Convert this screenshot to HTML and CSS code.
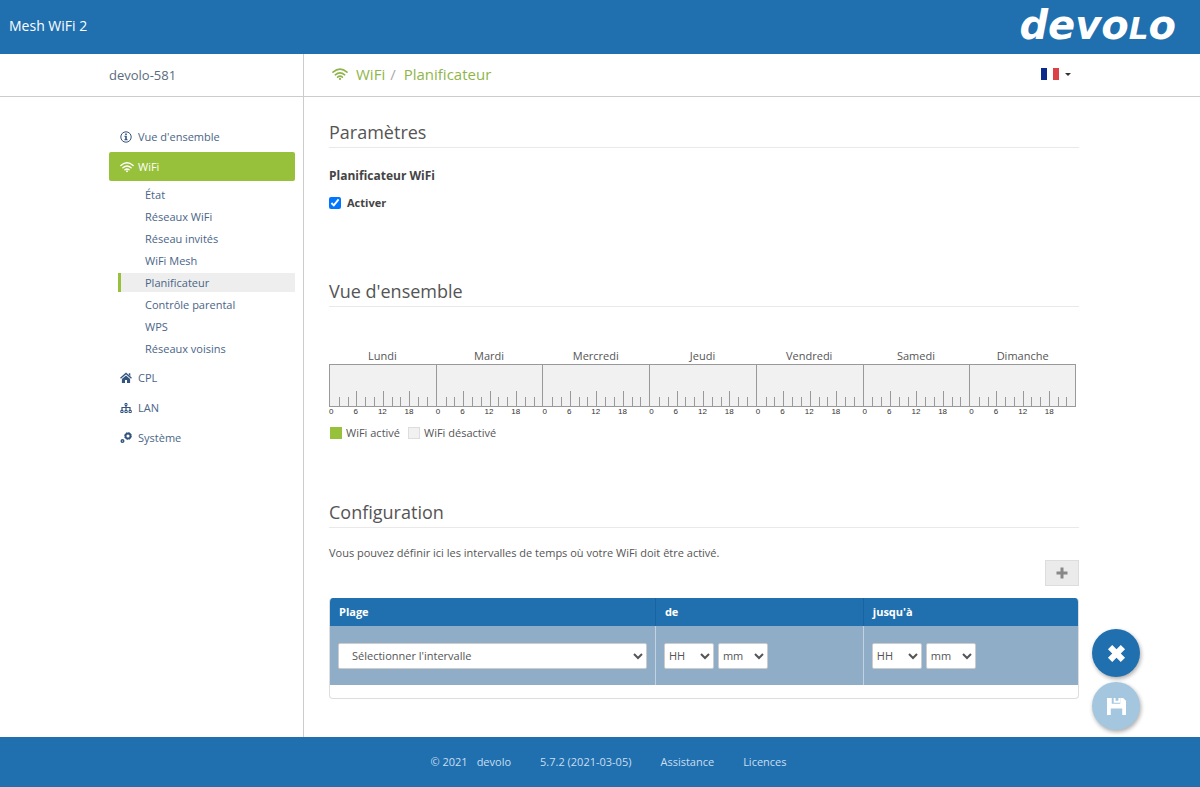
FILE: index.html
```html
<!DOCTYPE html>
<html lang="fr">
<head>
<meta charset="utf-8">
<title>Mesh WiFi 2 - Planificateur</title>
<link rel="stylesheet" href="styles.css">
</head>
<body>
<svg class="sprite" aria-hidden="true">
  <symbol id="wifi" viewBox="0 0 16 12"><g fill="none" stroke="currentColor" stroke-width="1.6" stroke-linecap="round"><path d="M1 4.2Q8-1.9 15 4.2"/><path d="M3.3 6.8Q8 2.8 12.7 6.8"/><path d="M5.6 9.2Q8 7.2 10.4 9.2"/></g><circle cx="8" cy="10.9" r="1.1" fill="currentColor"/></symbol>
</svg>
<header class="topbar">
  <span class="product">Mesh WiFi 2</span>
  <a class="logo" href="#" aria-label="devolo">devo<span class="logo-cap">L</span>o</a>
</header>
<div class="page">
  <aside class="side">
    <div class="device">devolo-581</div>
    <nav class="nav">
      <a class="item" href="#"><svg class="icon" viewBox="0 0 12 12" aria-hidden="true"><circle cx="6" cy="6" r="5.2" fill="none" stroke="currentColor"/><path fill="currentColor" d="M5.2 2.4h1.6V4H5.2zM4.4 4.8h2.4v3.5h.8v1H4.4v-1h.8V5.8h-.8z"/></svg>Vue d'ensemble</a>
      <a class="item active" href="#"><svg class="icon icon-wide" aria-hidden="true"><use href="#wifi"/></svg>WiFi</a>
      <div class="sub">
        <a href="#">État</a>
        <a href="#">Réseaux WiFi</a>
        <a href="#">Réseau invités</a>
        <a href="#">WiFi Mesh</a>
        <a class="current" href="#">Planificateur</a>
        <a href="#">Contrôle parental</a>
        <a href="#">WPS</a>
        <a href="#">Réseaux voisins</a>
      </div>
      <a class="item" href="#"><svg class="icon" viewBox="0 0 12 12" aria-hidden="true"><path fill="none" stroke="currentColor" stroke-width="1.3" d="M.5 6.3 6 1.4l5.5 4.9"/><path fill="currentColor" d="M8.8 1.2h1.5v3L8.8 2.8zM6 3.5l4.1 3.6V11H7V8H5v3H1.900V7.100z"/></svg>CPL</a>
      <a class="item" href="#"><svg class="icon" viewBox="0 0 12 12" aria-hidden="true"><path fill="none" stroke="currentColor" stroke-width="1.200" d="M6 3v6M2 9V5.500h8V9"/><path fill="none" stroke="currentColor" d="M5 1.500h2v2H5zM.800 8.500h2.300v2H.800zM4.900 8.500h2.300v2H4.900zM9 8.500h2.300v2H9z"/></svg>LAN</a>
      <a class="item" href="#"><svg class="icon" viewBox="0 0 12 12" aria-hidden="true"><g fill="none" stroke="currentColor"><circle cx="8" cy="4" r="2.500" stroke-width="1.900"/><circle cx="8" cy="4" r="3.500" stroke-width=".8" stroke-dasharray="1.400 1.350"/><circle cx="2.500" cy="9" r="1.300" stroke-width="1.400"/></g></svg>Système</a>
    </nav>
  </aside>
  <main class="main">
    <div class="crumbs">
      <div class="trail"><svg class="crumb-icon" aria-hidden="true"><use href="#wifi"/></svg><a href="#">WiFi</a><span class="slash">/</span><a href="#">Planificateur</a></div>
      <button class="lang" type="button" aria-label="Langue : français"><svg class="flag" viewBox="0 0 18 12" aria-hidden="true"><path fill="#0b2a8c" d="M0 0h6v12H0z"/><path fill="#fff" d="M6 0h6v12H6z"/><path fill="#dc4148" d="M12 0h6v12h-6z"/></svg><span class="caret"></span></button>
    </div>
    <div class="content">
      <section class="block params">
        <h2>Paramètres</h2>
        <h3>Planificateur WiFi</h3>
        <label class="check"><input type="checkbox" checked>Activer</label>
      </section>
      <section class="block overview">
        <h2>Vue d'ensemble</h2>
        <div class="week" id="week"></div>
        <div class="legend"><span class="key on"></span><span>WiFi activé</span><span class="key"></span><span>WiFi désactivé</span></div>
      </section>
      <section class="block">
        <h2>Configuration</h2>
        <p>Vous pouvez définir ici les intervalles de temps où votre WiFi doit être activé.</p>
        <div class="actions"><button class="add" type="button" aria-label="Ajouter"><svg viewBox="0 0 12 12" aria-hidden="true"><path fill="#888" d="M4.500.500h3v4h4v3h-4v4h-3v-4h-4v-3h4z"/></svg></button></div>
        <div class="panel">
          <table class="ranges">
            <thead><tr><th class="col-range">Plage</th><th class="col-from">de</th><th>jusqu'à</th></tr></thead>
            <tbody><tr>
              <td><select class="interval" aria-label="Plage"><option>Sélectionner l'intervalle</option></select></td>
              <td><div class="time"><select aria-label="de, heures"><option>HH</option></select><select aria-label="de, minutes"><option>mm</option></select></div></td>
              <td><div class="time"><select aria-label="jusqu'à, heures"><option>HH</option></select><select aria-label="jusqu'à, minutes"><option>mm</option></select></div></td>
            </tr></tbody>
          </table>
        </div>
      </section>
    </div>
  </main>
</div>
<footer class="footer"><span class="copy">© 2021 <a href="#">devolo</a></span><span>5.7.2 (2021-03-05)</span><a href="#">Assistance</a><a href="#">Licences</a></footer>
<div class="floating">
  <button class="round" type="button" aria-label="Annuler"><svg viewBox="0 0 20 20" aria-hidden="true"><path fill="#fff" d="M5.500 1 10 5.500 14.500 1 19 5.500 14.500 10l4.500 4.500-4.500 4.500-4.500-4.500L5.500 19 1 14.500 5.500 10 1 5.500z"/></svg></button>
  <button class="round" type="button" aria-label="Enregistrer" disabled><svg viewBox="0 0 20 20" aria-hidden="true"><path fill="#fff" d="M0 1h5v6h9V1h3l3 3v15h-4v-7H4v7H0z"/><path fill="#fff" d="M7 1h2v5H7zM9 4h3v2H9zM12 1h2v5h-2z"/></svg></button>
</div>
<script src="week.js"></script>
</body>
</html>
```
FILE: styles.css
```css
* { box-sizing: border-box; }
body {
  margin: 0;
  min-height: 100vh;
  display: flex;
  flex-direction: column;
  font: 11px/18px "Open Sans", "Noto Sans", sans-serif;
  color: #555;
  background: #fff;
}
a { color: inherit; text-decoration: none; }
button { padding: 0; border: 0; background: none; cursor: pointer; }
.sprite { display: none; }

.topbar {
  height: 54px;
  padding: 0 24px 2px 9px;
  display: flex;
  align-items: center;
  justify-content: space-between;
  background: #2070b0;
  color: #fff;
}
.product { font-size: 14px; }
.logo { font: italic bold 40px/48px "DejaVu Sans", sans-serif; }
.logo-cap { font-size: 31px; }

.page { flex: 1; display: grid; grid-template-columns: 304px 1fr; }
.side { border-right: 1px solid #ccc; }
.device {
  height: 43px;
  padding-left: 109px;
  border-bottom: 1px solid #ccc;
  font-size: 13px;
  line-height: 43px;
  color: #5a6b7d;
}
.nav {
  display: flex;
  flex-direction: column;
  gap: 1px;
  padding: 25px 8px 0 109px;
  color: #4a6587;
}
.item { display: flex; align-items: center; height: 29px; padding-left: 11px; border-radius: 2px; }
.icon { width: 12px; height: 12px; margin-right: 6px; color: #345480; }
.icon-wide { width: 14px; margin-right: 4px; color: #fff; }
.active { background: #98c13b; color: #fff; }
.sub { display: flex; flex-direction: column; gap: 3px; padding: 3px 0 4px 9px; }
.sub a { padding-left: 24px; border-left: 3px solid transparent; line-height: 19px; }
.sub .current { background: #eee; border-color: #98c13b; }

.crumbs {
  height: 43px;
  padding: 0 129px 2px 28px;
  display: flex;
  align-items: center;
  justify-content: space-between;
  border-bottom: 1px solid #ccc;
  font-size: 15px;
  color: #8fb54a;
}
.trail { display: flex; align-items: center; }
.crumb-icon { width: 16px; height: 12px; margin-right: 8px; }
.slash { margin: 0 8px 0 5px; color: #aaa; }
.lang { display: flex; align-items: center; gap: 6px; }
.flag { width: 18px; height: 12px; }
.caret { border: 3px solid transparent; border-top-color: #333; border-bottom: 0; }

.content { padding: 22px 121px 37px 25px; }
h2 {
  margin: 0;
  padding-bottom: 2px;
  border-bottom: 1px solid #e9e9e9;
  font-size: 18px;
  font-weight: 400;
  line-height: 26px;
}
h3 { margin: 19px 0 9px; font-size: 12px; color: #444; }
.params { padding-bottom: 66px; }
.check { display: flex; align-items: center; gap: 6px; font-weight: 700; color: #444; }
.check input { width: 12px; height: 12px; margin: 0; }
.overview { padding-bottom: 57px; }

.week { display: grid; grid-template-columns: repeat(7, 1fr); margin: 41px 3px 0 0; }
.day-name { text-align: center; line-height: 16px; }
.day-box {
  height: 43px;
  display: grid;
  grid-template-columns: repeat(12, 1fr);
  align-items: end;
  border: solid #999;
  border-width: 1px 0 1px 1px;
  background: #f1f1f1;
}
.day:last-child .day-box { border-right-width: 1px; }
.tick { height: 9px; border-left: 1px solid #999; }
.tick:nth-child(3n + 1) { height: 15px; }
.tick:first-child { border: 0; }
.hours {
  display: grid;
  grid-template-columns: repeat(4, 1fr);
  font: 8px/10px "Liberation Sans", Arial, sans-serif;
  color: #333;
}
.hour { width: 0; display: flex; justify-content: center; }
.hour:first-child { justify-content: start; }
.legend { display: flex; align-items: center; gap: 4px; margin-top: 7px; }
.key { width: 12px; height: 12px; margin-left: 4px; border: 1px solid #ddd; background: #f1f1f1; }
.key.on { margin-left: 1px; border-color: #98c13b; background: #98c13b; }

p { margin: 16px 0 0; }
.actions { display: flex; justify-content: flex-end; margin: -2px 0 12px; }
.add {
  width: 34px;
  height: 26px;
  display: grid;
  place-items: center;
  border: 1px solid #ddd;
  background: #ebebeb;
}
.add svg { width: 12px; height: 12px; }
.panel { padding-bottom: 13px; border: 1px solid #ddd; border-top: 0; border-radius: 4px; overflow: hidden; }
.ranges { width: 100%; table-layout: fixed; border-collapse: collapse; }
.col-range { width: 43.500%; }
.col-from { width: 27.800%; }
th { height: 28px; padding: 0 9px; text-align: left; background: #2070b0; color: #fff; border-left: 1px solid #1a639f; }
td { height: 59px; padding: 0 8px; background: #90adc7; border-left: 1px solid #c3d2e0; }
th:first-child, td:first-child { border-left: 0; }
td .time { display: flex; gap: 4px; }
select {
  width: 50px;
  height: 26px;
  border: 1px solid #ccc;
  border-radius: 2px;
  background: #fff;
  color: #555;
  font: 11px/18px "Open Sans", "Noto Sans", sans-serif;
}
.interval { width: 100%; padding-left: 9px; }

.footer {
  height: 50px;
  display: flex;
  align-items: center;
  justify-content: center;
  gap: 29px;
  padding-left: 17px;
  background: #2070b0;
  color: #c9deef;
}
.copy { display: flex; gap: 9px; }
.floating { position: fixed; right: 60px; bottom: 57px; display: flex; flex-direction: column; gap: 5px; }
.round {
  width: 48px;
  height: 48px;
  display: grid;
  place-items: center;
  border-radius: 50%;
  background: #2070b0;
  box-shadow: 1px 2px 4px #0005;
}
.round svg { width: 19px; height: 19px; }
.round:disabled { background: #a5c6df; }
```
FILE: week.js
```js
const days = ["Lundi", "Mardi", "Mercredi", "Jeudi", "Vendredi", "Samedi", "Dimanche"];
const ticks = '<span class="tick"></span>'.repeat(12);
const hours = [0, 6, 12, 18].map((h) => `<span class="hour">${h}</span>`).join("");
document.getElementById("week").innerHTML = days
  .map((d) => `<div class="day"><div class="day-name">${d}</div><div class="day-box">${ticks}</div><div class="hours">${hours}</div></div>`)
  .join("");
```
